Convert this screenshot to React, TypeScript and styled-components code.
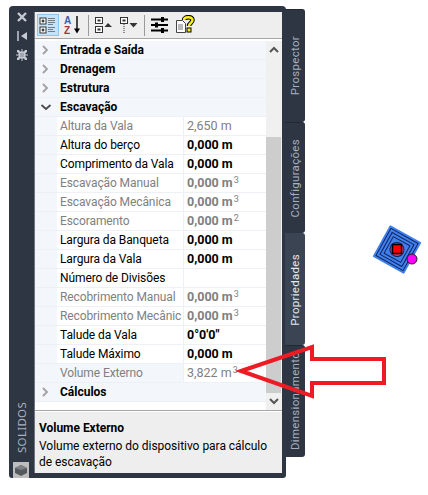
import React from "react";
import styled, { createGlobalStyle } from "styled-components";

const Global = createGlobalStyle`
  html, body { margin: 0; padding: 0; background: #fff; }
  body { font-family: Roboto, "Noto Sans", sans-serif; }
`;

const Page = styled.div`
  position: relative;
  width: 428px;
  height: 495px;
  overflow: hidden;
  padding: 6px 0 0 9px;
  box-sizing: border-box;
  background: #fff;
`;

const Dock = styled.div`
  display: flex;
  align-items: flex-start;
  width: 296px;
`;

const Frame = styled.div`
  display: flex;
  width: 277px;
  height: 472px;
  background: #2e3543;
  border-radius: 4px 4px 3px 3px;
  flex: none;
`;

const LeftBar = styled.div`
  width: 25px;
  flex: none;
  display: flex;
  flex-direction: column;
  align-items: center;
  padding-top: 4px;
  box-sizing: border-box;
  gap: 4px;
`;

const BarIcon = styled.svg`
  width: 14px;
  height: 14px;
  display: block;
  margin-bottom: 1px;
`;

const BarTitle = styled.div`
  margin-top: auto;
  writing-mode: vertical-rl;
  transform: rotate(180deg);
  color: #a9b0bc;
  font-family: "Noto Sans", sans-serif;
  font-size: 11.5px;
  line-height: 14px;
  letter-spacing: 0.3px;
  margin-bottom: 8px;
`;

const CubeBox = styled.svg`
  width: 16px;
  height: 16px;
  display: block;
  margin: -3px 0 0 -1px;
`;

const Main = styled.div`
  width: 248px;
  height: 461px;
  margin-top: 6px;
  flex: none;
  display: flex;
  flex-direction: column;
  background: #fff;
  border-left: 1px solid #6f7580;
  box-sizing: border-box;
`;

const Toolbar = styled.div`
  height: 27px;
  flex: none;
  display: flex;
  align-items: center;
  gap: 3px;
  padding-left: 2px;
  background: #eeeeee;
  border-bottom: 1px solid #a6a6a6;
  box-sizing: border-box;
`;

const ToolButton = styled.div<{ $active?: boolean }>`
  width: 22px;
  height: 22px;
  flex: none;
  display: flex;
  align-items: center;
  justify-content: center;
  box-sizing: border-box;
  background: ${(p) => (p.$active ? "#c5e3f8" : "transparent")};
  border: 1px solid ${(p) => (p.$active ? "#8fc6ee" : "transparent")};
`;

const ToolSep = styled.div`
  width: 1px;
  height: 21px;
  background: #9a9a9a;
  flex: none;
  margin: 0 1px;
`;

const Body = styled.div`
  height: 372px;
  flex: none;
  display: flex;
  padding-top: 2px;
  box-sizing: border-box;
  border-bottom: 1px solid #a6a6a6;
`;

const Grid = styled.div`
  width: 231px;
  flex: none;
  display: flex;
  flex-direction: column;
`;

const CategoryRow = styled.div`
  height: 19px;
  flex: none;
  display: flex;
  align-items: center;
  padding-bottom: 1px;
  background: #f3f7fb;
  border-bottom: 1px solid #edf1f6;
  box-sizing: border-box;
  color: #000;
  font-weight: 700;
  font-size: 12px;
`;

const Chevron = styled.svg`
  width: 22px;
  height: 10px;
  flex: none;
  margin-right: 3px;
`;

const PropRow = styled.div`
  height: 19px;
  flex: none;
  display: grid;
  grid-template-columns: 22px 127px 1fr;
  background: #fff;
  box-sizing: border-box;
  font-size: 12px;
  letter-spacing: -0.1px;
  line-height: 18px;
  border-bottom: 1px solid #edf1f6;
`;

const Gutter = styled.div`
  background: #f3f7fb;
`;

const PropName = styled.div<{ $dim?: boolean; $hot?: boolean }>`
  padding-left: 3px;
  white-space: nowrap;
  overflow: hidden;
  color: ${(p) => (p.$dim ? "#808080" : "#000")};
  background: ${(p) => (p.$hot ? "#f3f7fb" : "transparent")};
  border-right: 1px solid #edf1f6;
`;

const PropValue = styled.div<{ $dim?: boolean; $strong?: boolean }>`
  padding-left: 3px;
  white-space: nowrap;
  font-size: 12.5px;
  letter-spacing: 0;
  color: ${(p) => (p.$dim ? "#808080" : "#000")};
  font-weight: ${(p) => (p.$strong ? 700 : 400)};

  sup {
    font-size: 9px;
    line-height: 0;
    vertical-align: 4px;
    font-weight: 400;
    margin-left: 1px;
  }
`;

const ScrollBar = styled.div`
  width: 16px;
  flex: none;
  display: flex;
  flex-direction: column;
  background: #f0f0f0;
`;

const ScrollButton = styled.div`
  height: 17px;
  flex: none;
  display: flex;
  align-items: center;
  justify-content: center;
`;

const ScrollTrack = styled.div`
  flex: 1;
  display: flex;
  flex-direction: column;
  justify-content: flex-end;
`;

const ScrollThumb = styled.div`
  height: 256px;
  background: #cdcdcd;
  margin-right: 1px;
`;

const Help = styled.div`
  flex: 1;
  background: #eeeeee;
  padding: 8px 4px 0 4px;
  font-size: 12px;
  letter-spacing: -0.03px;
  line-height: 16.5px;
  color: #000;
  border-top: 1px solid #fff;
`;

const HelpTitle = styled.div`
  font-weight: 700;
  margin-bottom: 1px;
`;

const Tabs = styled.div`
  display: flex;
  flex-direction: column;
  width: 20px;
  margin-left: -1px;
  margin-top: 3px;
  flex: none;
  position: relative;
`;

const Tab = styled.div<{ $active?: boolean; $h: number }>`
  height: ${(p) => p.$h}px;
  display: flex;
  align-items: center;
  justify-content: center;
  box-sizing: border-box;
  background: ${(p) => (p.$active ? "#3b4453" : "#2e3543")};
  border-radius: 0 3px 3px 0;
  border-top: 1px solid ${(p) => (p.$active ? "#3b4453" : "#232835")};
`;

const TabLabel = styled.span<{ $active?: boolean }>`
  writing-mode: vertical-rl;
  transform: rotate(180deg);
  color: ${(p) => (p.$active ? "#e4e8ee" : "#a9b0bc")};
  font-size: 11.5px;
  line-height: 14px;
  letter-spacing: 0.3px;
  white-space: nowrap;
`;

const Overlay = styled.svg`
  position: absolute;
  left: 0;
  top: 0;
  width: 428px;
  height: 495px;
  pointer-events: none;
`;

const m3 = (v: string) => (
  <>
    {v} m<sup>3</sup>
  </>
);
const m2 = (v: string) => (
  <>
    {v} m<sup>2</sup>
  </>
);

type Prop = { name: string; value: React.ReactNode; dim?: boolean; strong?: boolean; hot?: boolean };

const props: Prop[] = [
  { name: "Altura da Vala", value: "2,650 m", dim: true },
  { name: "Altura do berço", value: "0,000 m", strong: true },
  { name: "Comprimento da Vala", value: "0,000 m", strong: true },
  { name: "Escavação Manual", value: m3("0,000"), dim: true, strong: true },
  { name: "Escavação Mecânica", value: m3("0,000"), dim: true, strong: true },
  { name: "Escoramento", value: m2("0,000"), dim: true, strong: true },
  { name: "Largura da Banqueta", value: "0,000 m", strong: true },
  { name: "Largura da Vala", value: "0,000 m", strong: true },
  { name: "Número de Divisões", value: "" },
  { name: "Recobrimento Manual", value: m3("0,000"), dim: true, strong: true },
  { name: "Recobrimento Mecânic", value: m3("0,000"), dim: true, strong: true },
  { name: "Talude da Vala", value: `0°0'0"`, strong: true },
  { name: "Talude Máximo", value: "0,000 m", strong: true },
  { name: "Volume Externo", value: m3("3,822"), dim: true, hot: true },
];

const ClosedChevron = () => (
  <Chevron viewBox="0 0 22 10">
    <path d="M8 1 L12 5 L8 9" fill="none" stroke="#a0a0a0" strokeWidth="1.8" />
  </Chevron>
);
const OpenChevron = () => (
  <Chevron viewBox="0 0 22 10">
    <path d="M6.5 3 L11 7 L15.500 3" fill="none" stroke="#4a4a4a" strokeWidth="1.8" />
  </Chevron>
);

const BoxedList = () => (
  <svg width="18" height="18" viewBox="0 0 18 18">
    <rect x="1" y="2" width="6" height="6" fill="#fff" stroke="#333" />
    <path d="M2.500 5h3M4 3.500v3" stroke="#000" />
    <rect x="1" y="11" width="6" height="6" fill="#fff" stroke="#333" />
    <path d="M2.500 14h3M4 12.500v3" stroke="#000" />
    <path d="M9 2.500h7M9 4.500h7M9 6.500h7M9 8.500h5M9 11.500h7M9 13.500h5M9 15.500h7" stroke="#6f7d8a" />
  </svg>
);

const SortAZ = () => (
  <svg width="18" height="20" viewBox="0 0 18 20">
    <text x="0" y="9" fontFamily="Liberation Sans" fontWeight="700" fontSize="10" fill="#3a5fb0">A</text>
    <text x="0" y="19" fontFamily="Liberation Sans" fontWeight="700" fontSize="10" fill="#9b3a3a">Z</text>
    <path d="M13 1v15" stroke="#000" strokeWidth="1.4" />
    <path d="M10 13.500 L13 18.500 L16 13.500Z" fill="#000" />
  </svg>
);

const CollapseIcon = () => (
  <svg width="20" height="18" viewBox="0 0 20 18">
    <rect x="1.500" y="1.500" width="7" height="6" fill="#fff" stroke="#333" />
    <rect x="3.500" y="3.500" width="3" height="2" fill="#333" />
    <rect x="1.500" y="10.500" width="7" height="6" fill="#fff" stroke="#333" />
    <rect x="3.500" y="12.500" width="3" height="2" fill="#333" />
    <path d="M10.500 11 L14 7 L18 11Z" fill="#333" />
  </svg>
);

const FilterIcon = () => (
  <svg width="20" height="18" viewBox="0 0 20 18">
    <rect x="1.500" y="1.500" width="7" height="6" fill="#fff" stroke="#333" />
    <rect x="3.500" y="3.500" width="3" height="2" fill="#333" />
    <path d="M5 8v9" stroke="#333" strokeDasharray="1 1" />
    <path d="M10.500 7 L14.500 11.500 L18.500 7Z" fill="#333" />
  </svg>
);

const SlidersIcon = () => (
  <svg width="20" height="18" viewBox="0 0 20 18">
    <path d="M1 3.500h17M1 9h17M1 14.500h17" stroke="#000" strokeWidth="2" />
    <rect x="11" y="1" width="3" height="5" fill="#000" />
    <rect x="5" y="6.500" width="3" height="5" fill="#000" />
    <rect x="11" y="12" width="3" height="5" fill="#000" />
  </svg>
);

const HelpIcon = () => (
  <svg width="20" height="20" viewBox="0 0 20 20">
    <path d="M1.500 5.500h6l3 3v9h-9z" fill="#fff" stroke="#444" />
    <path d="M3 10h5M3 12h5M3 14h5" stroke="#777" />
    <path d="M9 5 C9 1.500 17.500 1 17.500 5 C17.500 8 14 8 14 11" fill="none" stroke="#000" strokeWidth="4.500" />
    <path d="M9 5 C9 1.500 17.500 1 17.500 5 C17.500 8 14 8 14 11" fill="none" stroke="#f7ee1b" strokeWidth="2.500" />
    <rect x="12" y="13" width="4" height="4" fill="#f7ee1b" stroke="#000" />
  </svg>
);

export default function App() {
  return (
    <Page>
      <Global />
      <Dock>
        <Frame>
          <LeftBar>
            <BarIcon viewBox="0 0 14 14">
              <path d="M3 3 L11 11 M11 3 L3 11" stroke="#c6cbd3" strokeWidth="2.400" />
            </BarIcon>
            <BarIcon viewBox="0 0 14 14">
              <path d="M3 2v10" stroke="#c6cbd3" strokeWidth="1.500" />
              <path d="M12 3 L6 7 L12 11Z" fill="#c6cbd3" />
            </BarIcon>
            <BarIcon viewBox="0 0 14 14">
              <path d="M2 2h2l1 1.500h4L10 2h2v2l-1.500 1v4L12 10v2h-2L9 10.500H5L4 12H2v-2l1.500-1V5L2 4z" fill="#c6cbd3" />
              <rect x="5.500" y="5.500" width="3" height="3" fill="#2e3543" />
              <path d="M7 1v12M1 7h12" stroke="#c6cbd3" strokeWidth="1" />
            </BarIcon>
            <BarTitle>SOLIDOS</BarTitle>
            <CubeBox viewBox="0 0 16 16">
              <rect width="16" height="16" fill="#bdbdbd" />
              <path d="M2 6 L8 3 L14 6 L14 11 L8 14 L2 11Z" fill="#55585c" />
              <path d="M2 6 L8 3 L14 6 L8 8Z" fill="#7d8085" />
            </CubeBox>
          </LeftBar>
          <Main>
            <Toolbar>
              <ToolButton $active>
                <BoxedList />
              </ToolButton>
              <ToolButton>
                <SortAZ />
              </ToolButton>
              <ToolSep />
              <ToolButton>
                <CollapseIcon />
              </ToolButton>
              <ToolButton>
                <FilterIcon />
              </ToolButton>
              <ToolSep />
              <ToolButton>
                <SlidersIcon />
              </ToolButton>
              <ToolButton>
                <HelpIcon />
              </ToolButton>
            </Toolbar>
            <Body>
              <Grid>
                <CategoryRow>
                  <ClosedChevron />
                  Entrada e Saída
                </CategoryRow>
                <CategoryRow>
                  <ClosedChevron />
                  Drenagem
                </CategoryRow>
                <CategoryRow>
                  <ClosedChevron />
                  Estrutura
                </CategoryRow>
                <CategoryRow>
                  <OpenChevron />
                  Escavação
                </CategoryRow>
                {props.map((p) => (
                  <PropRow key={p.name}>
                    <Gutter />
                    <PropName $dim={p.dim} $hot={p.hot}>
                      {p.name}
                    </PropName>
                    <PropValue $dim={p.dim} $strong={p.strong}>
                      {p.value}
                    </PropValue>
                  </PropRow>
                ))}
                <CategoryRow>
                  <ClosedChevron />
                  Cálculos
                </CategoryRow>
              </Grid>
              <ScrollBar>
                <ScrollButton>
                  <svg width="10" height="7" viewBox="0 0 10 7">
                    <path d="M1 6 L5 2 L9 6" fill="none" stroke="#555" strokeWidth="2" />
                  </svg>
                </ScrollButton>
                <ScrollTrack>
                  <ScrollThumb />
                </ScrollTrack>
                <ScrollButton>
                  <svg width="10" height="7" viewBox="0 0 10 7">
                    <path d="M1 1 L5 5 L9 1" fill="none" stroke="#555" strokeWidth="2" />
                  </svg>
                </ScrollButton>
              </ScrollBar>
            </Body>
            <Help>
              <HelpTitle>Volume Externo</HelpTitle>
              Volume externo do dispositivo para cálculo
              <br />
              de escavação
            </Help>
          </Main>
        </Frame>
        <Tabs>
          <Tab $h={113}>
            <TabLabel>Prospector</TabLabel>
          </Tab>
          <Tab $h={111}>
            <TabLabel>Configurações</TabLabel>
          </Tab>
          <Tab $h={112} $active>
            <TabLabel $active>Propriedades</TabLabel>
          </Tab>
          <Tab $h={112}>
            <TabLabel>Dimensionamento</TabLabel>
          </Tab>
        </Tabs>
      </Dock>
      <Overlay viewBox="0 0 428 495">
        <g transform="rotate(29 397 249.500)">
          <rect x="379" y="231.500" width="36" height="36" fill="#3f80ee" rx="1" />
          <rect x="381.500" y="234" width="31" height="31" fill="none" stroke="#10245c" />
          <rect x="384.500" y="237" width="25" height="25" fill="none" stroke="#10245c" />
          <rect x="387.500" y="240" width="19" height="19" fill="none" stroke="#10245c" />
          <circle cx="397" cy="249.500" r="7" fill="#c8396a" stroke="#10245c" />
        </g>
        <rect x="392.500" y="244.500" width="9" height="9" fill="#ff0000" stroke="#000" strokeWidth="1.500" />
        <circle cx="412" cy="259" r="5" fill="#ff00ff" stroke="#222" />
        <path
          d="M241 371 L312 347 L312 359 L384 359 L384 383 L312 383 L312 396 Z"
          fill="none"
          stroke="#ed1c24"
          strokeWidth="4"
        />
      </Overlay>
    </Page>
  );
}
